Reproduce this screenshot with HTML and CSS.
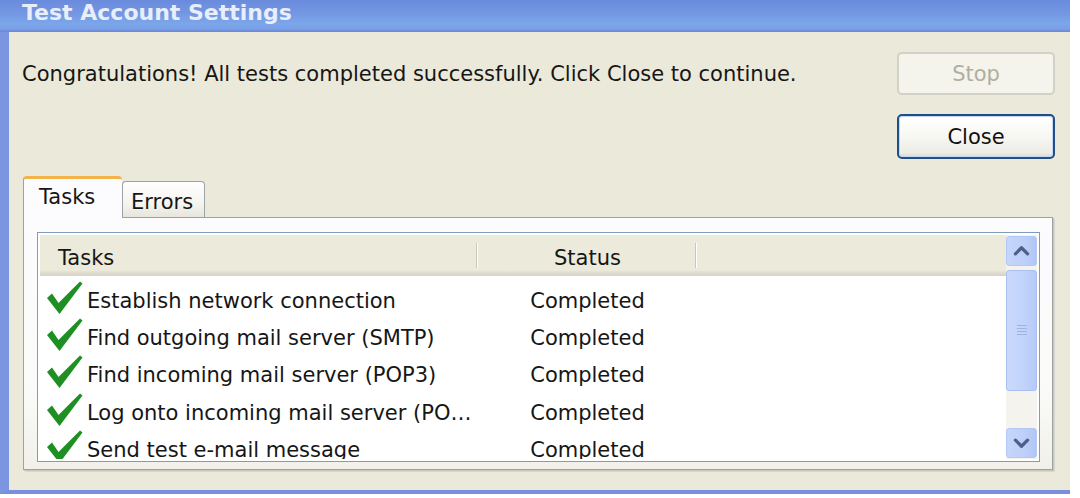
FILE: index.html
```html
<!DOCTYPE html>
<html>
<head>
<meta charset="utf-8">
<link rel="stylesheet" href="styles.css">
</head>
<body>
<div class="window">
  <div class="titlebar"><span class="title">Test Account Settings</span></div>
  <div class="content">
    <div class="top">
      <p class="msg">Congratulations! All tests completed successfully. Click Close to continue.</p>
      <div class="buttons">
        <button class="btn disabled">Stop</button>
        <button class="btn default">Close</button>
      </div>
    </div>
    <div class="tabs">
      <div class="tab active">Tasks</div>
      <div class="tab">Errors</div>
    </div>
    <div class="panel">
      <div class="list">
        <div class="table">
          <div class="head">
            <div class="hcell c1">Tasks</div>
            <div class="hcell c2">Status</div>
            <div class="hcell c3"></div>
          </div>
          <div class="row">
            <div class="cell c1"><svg class="check" viewBox="0 0 36 34"><path d="M0 17 L5 12.5 L11.5 22 L33 0.5 L35.5 2.5 L12.5 33 Z"/></svg><span>Establish network connection</span></div>
            <div class="cell c2">Completed</div>
          </div>
          <div class="row">
            <div class="cell c1"><svg class="check" viewBox="0 0 36 34"><path d="M0 17 L5 12.5 L11.5 22 L33 0.5 L35.5 2.5 L12.5 33 Z"/></svg><span>Find outgoing mail server (SMTP)</span></div>
            <div class="cell c2">Completed</div>
          </div>
          <div class="row">
            <div class="cell c1"><svg class="check" viewBox="0 0 36 34"><path d="M0 17 L5 12.5 L11.5 22 L33 0.5 L35.5 2.5 L12.5 33 Z"/></svg><span>Find incoming mail server (POP3)</span></div>
            <div class="cell c2">Completed</div>
          </div>
          <div class="row">
            <div class="cell c1"><svg class="check" viewBox="0 0 36 34"><path d="M0 17 L5 12.5 L11.5 22 L33 0.5 L35.5 2.5 L12.5 33 Z"/></svg><span>Log onto incoming mail server (PO…</span></div>
            <div class="cell c2">Completed</div>
          </div>
          <div class="row">
            <div class="cell c1"><svg class="check" viewBox="0 0 36 34"><path d="M0 17 L5 12.5 L11.5 22 L33 0.5 L35.5 2.5 L12.5 33 Z"/></svg><span>Send test e-mail message</span></div>
            <div class="cell c2">Completed</div>
          </div>
        </div>
        <div class="scrollbar">
          <div class="sbtn"><svg viewBox="0 0 31 30"><path d="M9 18 L15.5 11.5 L22 18" /></svg></div>
          <div class="thumb"><span class="grip"></span></div>
          <div class="track"></div>
          <div class="sbtn"><svg viewBox="0 0 31 30"><path d="M9 12 L15.5 18.5 L22 12" /></svg></div>
        </div>
      </div>
    </div>
  </div>
</div>
</body>
</html>
```

FILE: styles.css
```css
html, body {
  margin: 0;
  padding: 0;
  background: #ffffff;
}
body {
  width: 1080px;
  height: 498px;
  overflow: hidden;
  font-family: "DejaVu Sans", sans-serif;
  font-size: 21px;
  color: #161616;
}
.window {
  width: 1070px;
  height: 494px;
  box-sizing: border-box;
  border-left: 9px solid #7b95e0;
  border-bottom: 4px solid #7a8fe0;
  background: #ebe9d9;
  display: flex;
  flex-direction: column;
  position: relative;
}
.titlebar {
  height: 32px;
  margin-left: -9px;
  background: linear-gradient(to bottom, #6a8bdc 0%, #7396e2 40%, #7ba7ea 75%, #7a9fe6 90%, #6c85d8 100%);
  display: flex;
  align-items: flex-end;
  padding-left: 22px;
  overflow: hidden;
}
.title {
  font-family: "DejaVu Sans", sans-serif;
  font-weight: bold;
  font-size: 22px;
  line-height: 26px;
  color: #e8eefb;
  margin-bottom: 6px;
}
.content {
  flex: 1;
  display: flex;
  flex-direction: column;
  padding: 20px 15px 0 14px;
}
.top {
  display: flex;
  justify-content: space-between;
  align-items: flex-start;
}
.msg {
  margin: 7px 0 0 -1px;
  line-height: 30px;
}
.buttons {
  display: flex;
  flex-direction: column;
  gap: 19px;
  width: 158px;
}
.btn {
  font-family: inherit;
  font-size: 21px;
  border-radius: 5px;
  padding: 0;
  cursor: default;
}
.btn.disabled {
  height: 43px;
  border: 2px solid #d3d1c5;
  background: #f4f3ec;
  color: #b1ae9f;
}
.btn.default {
  height: 45px;
  border: 2px solid #1f4f86;
  background: linear-gradient(to bottom, #ffffff 0%, #f7f7f3 50%, #ecebe4 90%, #dcd9cd 100%);
  box-shadow: inset 0 0 0 1px #c6d6f2;
  color: #111;
}
.tabs {
  display: flex;
  align-items: flex-end;
  margin-top: 17px;
  height: 42px;
}
.tab {
  box-sizing: border-box;
  height: 37px;
  padding: 0 0 0 8px;
  width: 83px;
  border: 1px solid #9aa3a5;
  border-bottom: none;
  border-radius: 4px 4px 0 0;
  background: linear-gradient(to bottom, #ffffff 0%, #f5f4ef 60%, #e6e4da 100%);
  line-height: 40px;
}
.tab.active {
  height: 42px;
  width: 99px;
  padding-left: 15px;
  background: #fcfcfe;
  border-top: 3px solid #f2b34a;
  border-left: 1px solid #9aa3a5;
  border-right: none;
  line-height: 36px;
  position: relative;
  z-index: 1;
}
.panel {
  width: 1030px;
  height: 253px;
  box-sizing: border-box;
  border: 1px solid #9aa3a5;
  margin-top: -1px;
  background: linear-gradient(to bottom, #fcfcfe 0%, #fafaf8 70%, #f1f0ea 100%);
  box-shadow: 1px 1px 0 #c9c7ba, 2px 2px 0 #d9d7cb;
  padding: 14px 12px 7px 13px;
}
.list {
  height: 230px;
  box-sizing: border-box;
  border: 1px solid #7f9db9;
  padding: 2px 2px 2px 2px;
  background: #ffffff;
  display: flex;
}
.table {
  flex: 1;
  overflow: hidden;
}
.head {
  display: flex;
  height: 41px;
  box-sizing: border-box;
  padding-top: 4px;
  background: linear-gradient(to bottom, #ebeadb 0%, #ebeadb 86%, #e2e0d2 90%, #d6d3c4 100%);
  margin-bottom: 6px;
}
.hcell {
  display: flex;
  align-items: center;
  position: relative;
}
.hcell.c1 { width: 438px; padding-left: 18px; box-sizing: border-box; }
.hcell.c2 { width: 219px; justify-content: center; }
.hcell.c1::after, .hcell.c2::after {
  content: "";
  position: absolute;
  right: 0;
  top: 4px;
  bottom: 8px;
  width: 2px;
  background: linear-gradient(to right, #cbc7b8 50%, #ffffff 50%);
}
.row {
  display: flex;
  height: 37.4px;
  align-items: center;
}
.cell.c1 {
  width: 438px;
  box-sizing: border-box;
  padding-left: 7px;
  display: flex;
  align-items: center;
  gap: 4px;
  white-space: nowrap;
}
.cell.c2 {
  width: 219px;
  text-align: center;
}
.check {
  width: 36px;
  height: 34px;
  margin-top: -6px;
  flex: none;
}
.check path {
  fill: #1e8f22;
}
.scrollbar {
  width: 31px;
  display: flex;
  flex-direction: column;
  background: #f4f3ee;
}
.sbtn {
  height: 30px;
  box-sizing: border-box;
  margin-top: 1px;
  border: 1px solid #b4c8f6;
  border-radius: 3px;
  background: linear-gradient(to right, #c6d6fb 0%, #bdd0fa 60%, #b2c6f6 100%);
}
.sbtn:last-child { margin-top: 0; margin-bottom: 1px; }
.sbtn svg {
  width: 100%;
  height: 100%;
  display: block;
}
.sbtn path {
  fill: none;
  stroke: #4d6185;
  stroke-width: 3.5;
  stroke-linecap: round;
  stroke-linejoin: round;
}
.thumb {
  height: 121px;
  margin-top: 4px;
  box-sizing: border-box;
  border: 1px solid #a9bff0;
  border-radius: 3px;
  background: linear-gradient(to right, #cad9fc 0%, #c1d3fb 60%, #b6caf6 100%);
  display: flex;
  align-items: center;
  justify-content: center;
}
.grip {
  width: 10px;
  height: 11px;
  background: repeating-linear-gradient(to bottom, #9fb3e4 0, #9fb3e4 1px, transparent 1px, transparent 3px);
}
.track {
  flex: 1;
}
```
